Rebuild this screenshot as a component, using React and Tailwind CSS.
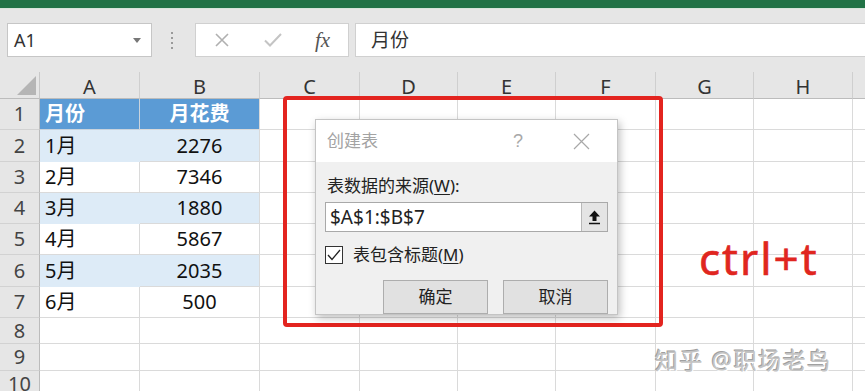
import React from 'react';

const cols = [
  { label: 'A', w: 'w-[100px]' },
  { label: 'B', w: 'w-[120px]' },
  { label: 'C', w: 'w-[100px]' },
  { label: 'D', w: 'w-[98px]' },
  { label: 'E', w: 'w-[98px]' },
  { label: 'F', w: 'w-[100px]' },
  { label: 'G', w: 'w-[98px]' },
  { label: 'H', w: 'w-[99px]' },
  { label: '', w: 'w-[98px]' },
];

const rows = [
  { n: 1, h: 'h-[31px]', a: '月份', b: '月花费' },
  { n: 2, h: 'h-[32px]', a: '1月', b: '2276' },
  { n: 3, h: 'h-[31px]', a: '2月', b: '7346' },
  { n: 4, h: 'h-[31px]', a: '3月', b: '1880' },
  { n: 5, h: 'h-[31px]', a: '4月', b: '5867' },
  { n: 6, h: 'h-[32px]', a: '5月', b: '2035' },
  { n: 7, h: 'h-[31px]', a: '6月', b: '500' },
  { n: 8, h: 'h-[26px]' },
  { n: 9, h: 'h-[27px]' },
  { n: 10, h: 'h-[27px]' },
];

function FormulaBar() {
  return (
    <div className="bg-[#e6e6e6] h-[63px] flex items-center pb-[1px]">
      {/* Name box */}
      <div className="ml-[7px] w-[145px] h-[34px] bg-white border border-[#c6c6c6] flex items-center justify-between pl-[6px] pr-[10px]">
        <span className="text-[18px] text-[#333]">A1</span>
        <svg width="8" height="5" viewBox="0 0 8 5"><path d="M0 0h8L4 5z" fill="#777" /></svg>
      </div>
      {/* separator dots */}
      <div className="ml-[19px] w-[3px] flex flex-col gap-[3px]">
        <div className="w-[2px] h-[2px] bg-[#9a9a9a]" />
        <div className="w-[2px] h-[2px] bg-[#9a9a9a]" />
        <div className="w-[2px] h-[2px] bg-[#9a9a9a]" />
        <div className="w-[2px] h-[2px] bg-[#9a9a9a]" />
      </div>
      {/* cancel / enter / fx */}
      <div className="ml-[21px] w-[154px] h-[34px] bg-white border border-[#d0d0d0] flex items-center">
        <svg className="ml-[18px]" width="16" height="16" viewBox="0 0 16 16">
          <path d="M2 2l12 12M14 2L2 14" stroke="#b0b0b0" strokeWidth="1.6" fill="none" />
        </svg>
        <svg className="ml-[34px]" width="18" height="16" viewBox="0 0 18 16">
          <path d="M1 8.5l5 5L17 2" stroke="#c4c4c4" strokeWidth="2" fill="none" />
        </svg>
        <span className="ml-[33px] font-['Liberation_Serif',serif] italic text-[21px] text-[#555] leading-none">fx</span>
      </div>
      {/* formula input */}
      <div className="ml-[6px] flex-1 h-[34px] bg-white border-y border-l border-[#d0d0d0] flex items-center pl-[15px]">
        <span className="text-[19px] text-[#333]">月份</span>
      </div>
    </div>
  );
}

function HeaderRow() {
  return (
    <div className="flex h-[27px] bg-[#e6e6e6]">
      <div className="w-[40px] shrink-0 relative border-r border-[#c8c8c8] border-b border-b-[#bcbcbc]">
        <svg className="absolute right-[3px] bottom-[3px]" width="19" height="19" viewBox="0 0 19 19">
          <path d="M19 0V19H0z" fill="#b5b5b5" />
        </svg>
      </div>
      {cols.map((c, i) => (
        <div
          key={i}
          className={`${c.w} shrink-0 border-r border-[#cfcfcf] border-b border-b-[#bcbcbc] flex items-center justify-center text-[20px] text-[#333] leading-none pt-[4px]`}
        >
          {c.label}
        </div>
      ))}
    </div>
  );
}

function SheetRow({ r }) {
  const isHead = r.n === 1;
  const isBand = r.n === 2 || r.n === 4 || r.n === 6;
  const inTable = r.n <= 7;
  const tableBg = isHead ? 'bg-[#5b9bd5]' : isBand ? 'bg-[#ddebf7]' : 'bg-white';
  const tableText = isHead ? 'text-white font-bold' : 'text-[#111]';
  const borderB = inTable ? 'border-b border-[#c9d3dd]' : 'border-b border-[#dadada]';
  const aBorderR = isHead ? 'border-r border-[#5b9bd5]' : isBand ? 'border-r border-[#ddebf7]' : 'border-r border-[#dadada]';

  return (
    <div className={`flex ${r.h}`}>
      <div className="w-[40px] shrink-0 bg-[#e6e6e6] border-r border-[#bcbcbc] border-b border-b-[#d2d2d2] flex items-center justify-center text-[20px] text-[#444]">
        {r.n}
      </div>
      <div className={`w-[100px] shrink-0 ${tableBg} ${aBorderR} ${borderB} flex items-center pl-[5px] text-[20px] ${tableText}`}>
        {r.a}
      </div>
      <div className={`w-[120px] shrink-0 ${tableBg} border-r border-[#dadada] ${borderB} flex items-center justify-center text-[20px] ${tableText}`}>
        {r.b}
      </div>
      {cols.slice(2).map((c, i) => (
        <div key={i} className={`${c.w} shrink-0 bg-white border-r border-b border-[#dadada]`} />
      ))}
    </div>
  );
}

function Dialog() {
  return (
    <div className="absolute left-[315px] top-[119px] w-[303px] h-[196px] bg-[#f0f0f0] border border-[#c4c4c4] shadow-[2px_3px_8px_rgba(0,0,0,0.25)] flex flex-col">
      <div className="h-[42px] bg-white flex items-center pl-[11px] shrink-0">
        <span className="text-[17px] text-[#a3a3a3]">创建表</span>
        <span className="ml-[135px] text-[18px] text-[#a8a8a8] font-['Liberation_Sans',sans-serif]">?</span>
        <svg className="ml-[50px]" width="17" height="17" viewBox="0 0 17 17">
          <path d="M1 1l15 15M16 1L1 16" stroke="#a8a8a8" strokeWidth="1.2" fill="none" />
        </svg>
      </div>
      <div className="flex flex-col px-[9px] pt-[12px]">
        <div className="pl-[2px] text-[17px] leading-[24px] text-[#222]">
          表数据的来源(<span className="underline underline-offset-2">W</span>):
        </div>
        <div className="mt-[4px] h-[30px] bg-white border border-[#a9a9a9] flex items-center">
          <span className="flex-1 pl-[4px] text-[19px] text-[#222] font-['Noto_Sans',sans-serif]">$A$1:$B$7</span>
          <div className="w-[26px] h-[28px] bg-[#e4e4e4] border-l border-[#b8b8b8] flex items-center justify-center">
            <svg width="13" height="15" viewBox="0 0 13 15">
              <path d="M6.5 0.5L12 6.5H8.5V11H4.5V6.5H1z" fill="#111" />
              <path d="M1 13.5h11" stroke="#111" strokeWidth="1.5" />
            </svg>
          </div>
        </div>
        <div className="mt-[10px] flex items-center">
          <div className="w-[18px] h-[18px] bg-white border border-[#333] flex items-center justify-center">
            <svg width="14" height="12" viewBox="0 0 14 12">
              <path d="M1 6l4 4.5L13 1" stroke="#222" strokeWidth="1.3" fill="none" />
            </svg>
          </div>
          <span className="ml-[10px] text-[17px] text-[#222]">
            表包含标题(<span className="underline underline-offset-2">M</span>)
          </span>
        </div>
        <div className="mt-[12px] flex justify-end gap-[15px]">
          <button className="w-[105px] h-[34px] bg-[#e1e1e1] border border-[#adadad] text-[17px] text-[#222]">确定</button>
          <button className="w-[105px] h-[34px] bg-[#e1e1e1] border border-[#adadad] text-[17px] text-[#222]">取消</button>
        </div>
      </div>
    </div>
  );
}

export default function App() {
  return (
    <div className="relative w-[865px] h-[391px] overflow-hidden bg-white font-['Noto_Sans','Noto_Sans_CJK_SC',sans-serif]">
      <div className="h-[8px] bg-[#217346]" />
      <div className="h-[1px] bg-[#d6e6db]" />
      <FormulaBar />
      <HeaderRow />
      {rows.map((r) => (
        <SheetRow key={r.n} r={r} />
      ))}

      {/* highlight frame */}
      <div className="absolute left-[283px] top-[96px] w-[380px] h-[231px] border-[4px] border-[#e3241f] rounded-[4px]" />

      <Dialog />

      <div className="absolute left-[699px] top-[236px] text-[44px] tracking-[2px] leading-none text-[#e0261f] [-webkit-text-stroke:0.6px_#e0261f]">ctrl+t</div>

      <div className="absolute left-[655px] top-[343px] text-[23px] tracking-[1.5px] text-[#c4c4c4] [text-shadow:1px_1px_0_#fff,-1px_-1px_0_#a0a0a0]">
        知乎 @职场老鸟
      </div>
    </div>
  );
}
